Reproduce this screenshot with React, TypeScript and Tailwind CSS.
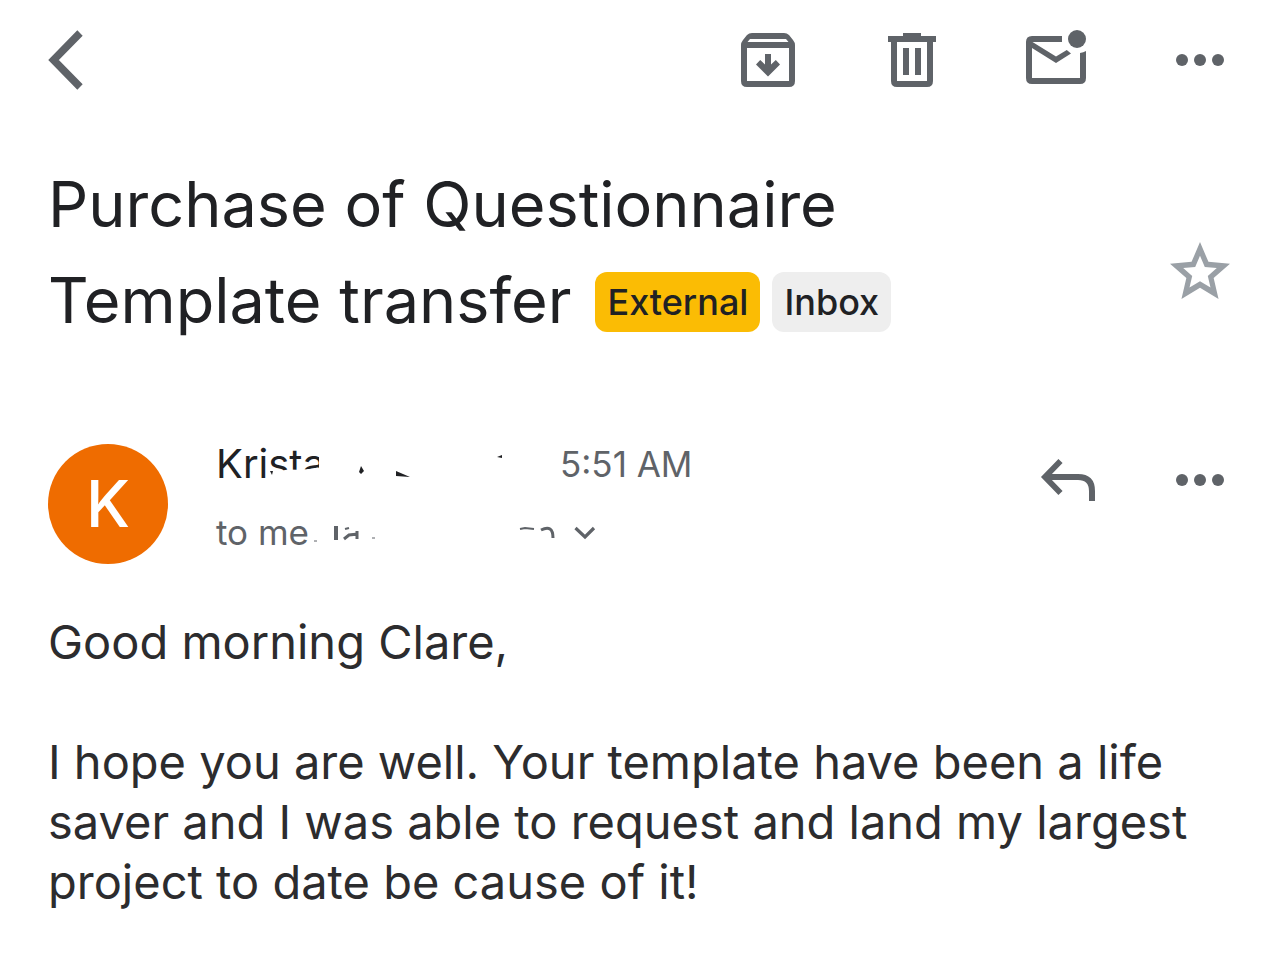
import { useState } from "react";
import type { ReactNode } from "react";

interface IconProps {
  className?: string;
}

function BackIcon({ className }: IconProps) {
  return (
    <svg viewBox="0 0 36 72" className={className} fill="none" stroke="currentColor" strokeWidth="7.5" aria-hidden="true">
      <path d="M32 9 L5.500 36 L32 63" />
    </svg>
  );
}

function ArchiveIcon({ className }: IconProps) {
  return (
    <svg viewBox="0 0 72 72" className={className} fill="currentColor" aria-hidden="true">
      <path
        fillRule="evenodd"
        d="M20 9 H52 Q55 9 57 11 L61 16 Q63 18.500 63 21 V57 Q63 63 57 63 H15 Q9 63 9 57 V21 Q9 18.500 11 16 L15 11 Q17 9 20 9 Z M18 15 L15.500 18 H56.500 L54 15 Z M15 24 V57 H57 V24 Z"
      />
      <path d="M33 30 H39 V40.500 L43.800 36 L48 40.500 L36 52.500 L24 40.500 L28.200 36 L33 40.500 Z" />
    </svg>
  );
}

function TrashIcon({ className }: IconProps) {
  return (
    <svg viewBox="0 0 72 72" className={className} fill="currentColor" aria-hidden="true">
      <path
        fillRule="evenodd"
        d="M12 12 H27 V9 H45 V12 H60 V18 H57 V57 Q57 63 51 63 H21 Q15 63 15 57 V18 H12 Z M21 18 V57 H51 V18 Z"
      />
      <path d="M27 24 H33 V51 H27 Z M39 24 H45 V51 H39 Z" />
    </svg>
  );
}

function UnreadIcon({ className }: IconProps) {
  return (
    <svg viewBox="0 0 72 72" className={className} fill="currentColor" aria-hidden="true">
      <path d="M12 12 H42 V18 H12.500 L36 32.500 L46.800 26 L51 29.500 L36 39 L12 24 V54 H60 V29 Q63.500 28.500 66 27 V54 Q66 60 60 60 H12 Q6 60 6 54 V18 Q6 12 12 12 Z" />
      <circle cx="57" cy="15" r="9" />
    </svg>
  );
}

function MoreIcon({ className }: IconProps) {
  return (
    <svg viewBox="0 0 72 72" className={className} fill="currentColor" aria-hidden="true">
      <circle cx="18" cy="36" r="6" />
      <circle cx="36" cy="36" r="6" />
      <circle cx="54" cy="36" r="6" />
    </svg>
  );
}

function StarIcon({ className }: IconProps) {
  return (
    <svg viewBox="0 0 24 24" className={className} fill="currentColor" aria-hidden="true">
      <path
        fillRule="evenodd"
        d="M12 2 L14.810 8.620 L22 9.240 L16.550 13.970 L18.180 21 L12 17.270 L5.820 21 L7.450 13.970 L2 9.240 L9.190 8.620 Z M12 6.600 L10.400 10.350 L6.400 10.700 L9.400 13.350 L8.500 17.200 L12 15.100 L15.500 17.200 L14.600 13.350 L17.600 10.700 L13.600 10.350 Z"
      />
    </svg>
  );
}

function ReplyIcon({ className }: IconProps) {
  return (
    <svg viewBox="0 0 72 72" className={className} fill="none" stroke="currentColor" aria-hidden="true">
      <path d="M13 33 H46 Q60 33 60 47 V57" strokeWidth="6" />
      <path d="M28.500 17 L13 33 L28.500 49" strokeWidth="5.800" />
    </svg>
  );
}

function IconButton({ label, children }: { label: string; children: ReactNode }) {
  return (
    <button type="button" aria-label={label} className="shrink-0 cursor-pointer text-[#5f6368]">
      {children}
    </button>
  );
}

// White brush stroke that hides most of the sender's name
function NameScribble() {
  return (
    <svg viewBox="0 0 340 60" className="absolute top-0 left-0 h-15 w-85" aria-hidden="true">
      <path d="M53 37 Q64 37 72 35.500 Q88 36 92 35 Q98 35 103 34 V10 H340 V60 H53 Z" fill="white" />
      <path
        d="M54 37 L57 37 L56 41 Z M143 38 L145 32 L148 37 L145 40 Z M180 37 L194 43 L180 42 Z M281 23 L286 21 V24 Z"
        fill="#202124"
      />
    </svg>
  );
}

// Same for the recipients between "me" and the chevron
function RecipientScribble() {
  return (
    <svg viewBox="0 0 340 60" className="absolute top-0 left-0 h-15 w-85" aria-hidden="true">
      <path d="M94 0 H340 V60 H94 Z" fill="white" />
      <g fill="none" stroke="#5f6368" strokeWidth="3">
        <path d="M120 24 V38" strokeWidth="4" />
        <path d="M128 37 L133 33 L142 32 M141 29 V37" />
        <path d="M129 27 L133 26" strokeWidth="2" />
        <path d="M98 39 H101 M156 36 H159" strokeWidth="1" />
        <path d="M304 27 L309 26 L318 27" strokeWidth="2" />
        <path d="M325 28 Q337 22 337 36" />
      </g>
    </svg>
  );
}

export default function App() {
  const [starred, setStarred] = useState(false);

  return (
    <div className="min-h-screen bg-white px-12 pt-6 pb-12 font-['Inter',sans-serif] text-[#202124]">
      {/* Toolbar */}
      <header className="flex items-center justify-between">
        <IconButton label="Back">
          <BackIcon className="h-18 w-9" />
        </IconButton>
        <div className="flex items-center gap-18">
          <IconButton label="Archive">
            <ArchiveIcon className="size-18" />
          </IconButton>
          <IconButton label="Delete">
            <TrashIcon className="size-18" />
          </IconButton>
          <IconButton label="Mark as unread">
            <UnreadIcon className="size-18" />
          </IconButton>
          <IconButton label="More options">
            <MoreIcon className="size-18" />
          </IconButton>
        </div>
      </header>

      <main>
        {/* Subject and labels */}
        <div className="mt-15 flex items-end justify-between pb-10">
          <h1 className="flex max-w-4xl flex-wrap items-center gap-x-6 text-[63px] leading-24">
            <span>Purchase of Questionnaire</span> <span>Template transfer</span>
            <span className="flex gap-3 pt-1 text-4xl leading-15 font-medium">
              <span className="rounded-xl bg-[#fbbc04] px-3">External</span>
              <span className="rounded-xl bg-[#eeeeee] px-3">Inbox</span>
            </span>
          </h1>
          <button
            type="button"
            aria-label="Star"
            aria-pressed={starred}
            onClick={() => setStarred(!starred)}
            className={`mb-10 shrink-0 cursor-pointer ${starred ? "text-[#fbbc04]" : "text-[#9aa0a6]"}`}
          >
            <StarIcon className="size-18" />
          </button>
        </div>

        {/* Sender */}
        <div className="mt-14 flex items-start">
          <div className="flex size-30 shrink-0 items-center justify-center rounded-full bg-[#ef6c00] text-[64px] font-medium text-white">
            K
          </div>
          <div className="ml-12 flex-1">
            <div className="flex h-10 items-center">
              <div className="relative flex h-15 w-85 items-center text-[40px]">
                Krista
                <NameScribble />
              </div>
              <time className="ml-1 text-[35px] text-[#5f6368]">5:51 AM</time>
            </div>
            <div className="mt-7 flex h-10 items-center text-[35px] text-[#5f6368]">
              <div className="relative flex h-15 w-85 items-center">
                to me
                <RecipientScribble />
              </div>
              <button type="button" aria-label="Show details" className="ml-4 cursor-pointer">
                <svg viewBox="0 0 24 24" className="size-6" fill="none" stroke="currentColor" strokeWidth="3.2" aria-hidden="true">
                  <path d="M3.500 8 L13 17 L22 8" />
                </svg>
              </button>
            </div>
          </div>
          <div className="flex gap-15">
            <IconButton label="Reply">
              <ReplyIcon className="size-18" />
            </IconButton>
            <IconButton label="Message options">
              <MoreIcon className="size-18" />
            </IconButton>
          </div>
        </div>

        {/* Message body */}
        <div className="mt-12 space-y-15 text-[47px] leading-15 text-[#2c2c2e]">
          <p>Good morning Clare,</p>
          <p>
            I hope you are well. Your template have been a life saver and I was able to request and land my largest
            project to date be cause of it!
          </p>
        </div>
      </main>
    </div>
  );
}
